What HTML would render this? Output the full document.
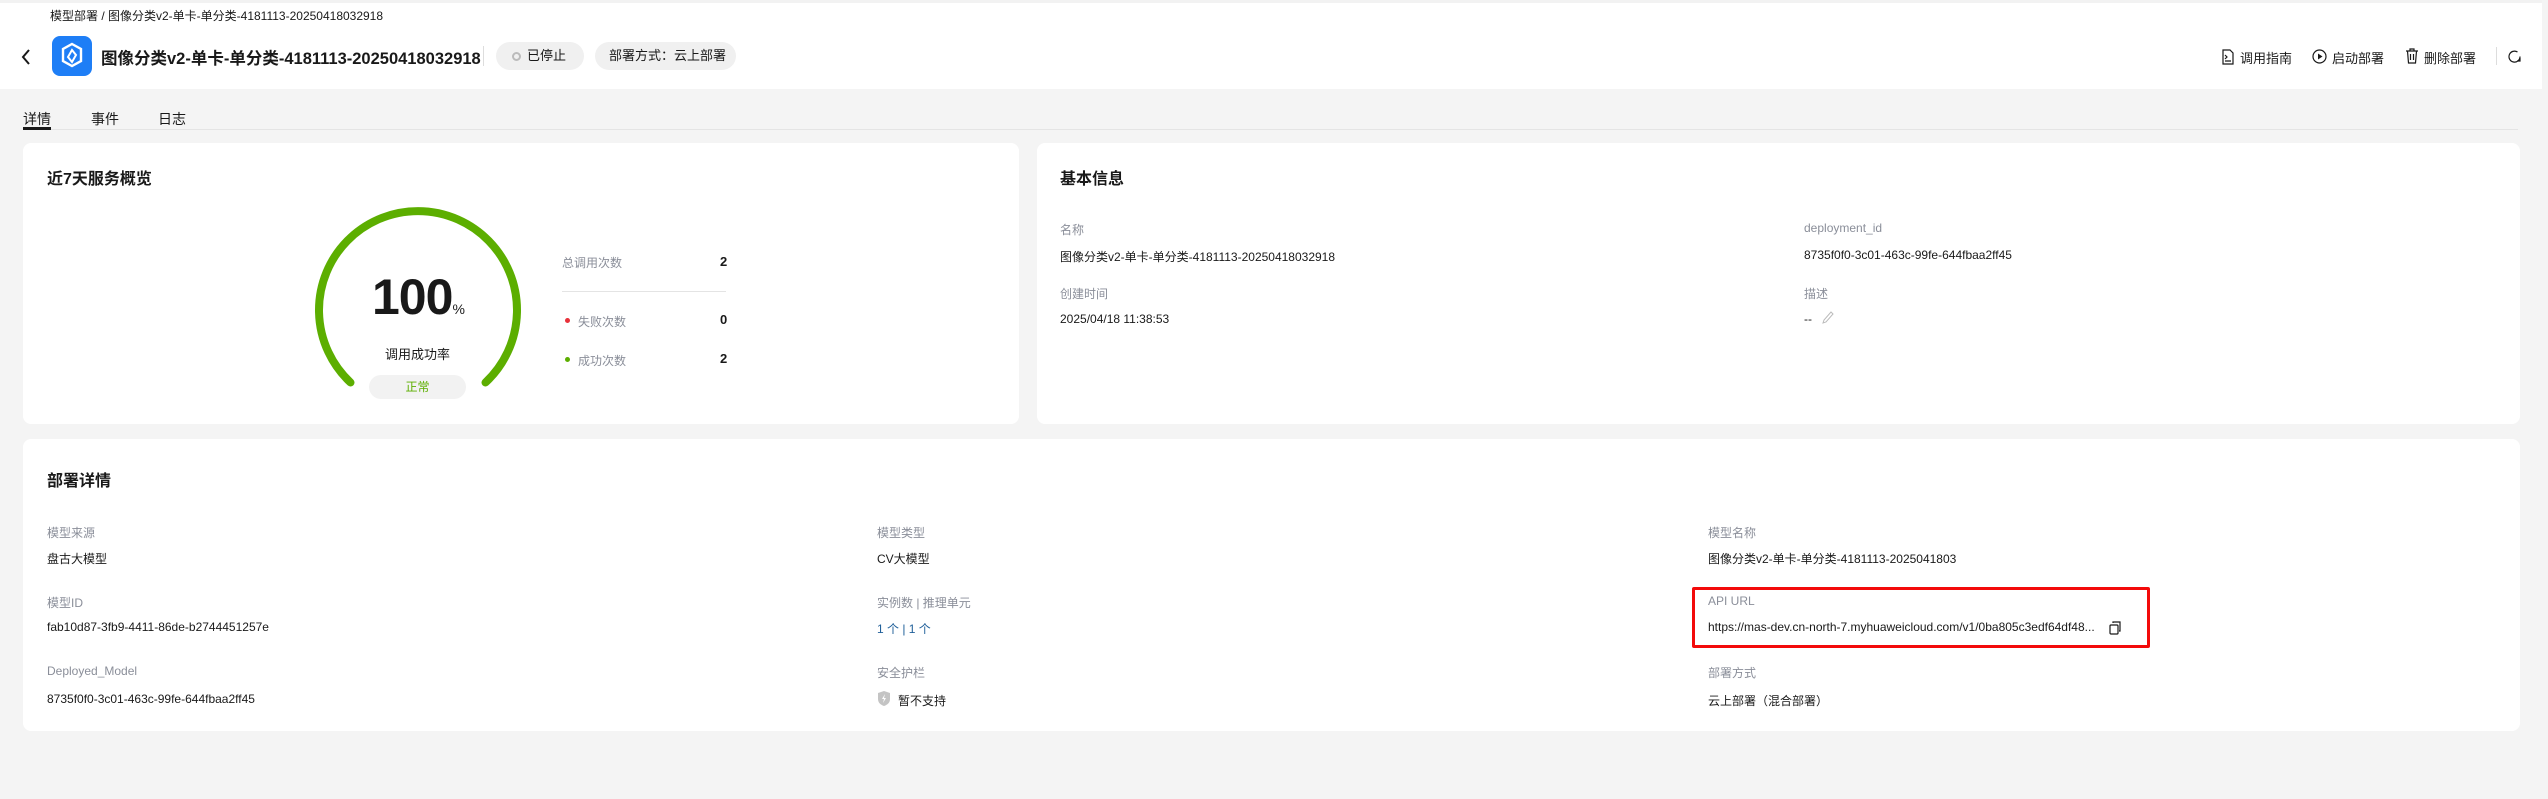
<!DOCTYPE html>
<html><head><meta charset="utf-8"><style>
*{margin:0;padding:0;box-sizing:border-box}
body{width:2548px;height:799px;background:#f4f4f4;font-family:"Liberation Sans","Noto Sans CJK SC",sans-serif;color:#191919;position:relative;overflow:hidden;font-size:12px}
.a{position:absolute;white-space:nowrap}
.hdr{position:absolute;left:0;top:0;width:2542px;height:89px;background:#fff;border-top:3px solid #f2f2f2}
.card{position:absolute;background:#fff;border-radius:8px}
.lbl{color:#8a8e99;font-size:12px}
.val{color:#191919;font-size:12px}
.ct{font-size:16px;font-weight:bold}
.pill{position:absolute;height:28px;border-radius:14px;background:#f0f0f0;font-size:13px;line-height:28px;color:#191919}
</style></head><body>
<div class="hdr"></div>
<div class="a" style="left:50px;top:7px;font-size:12px">模型部署 / 图像分类v2-单卡-单分类-4181113-20250418032918</div>
<svg class="a" style="left:19px;top:47px" width="14" height="20" viewBox="0 0 14 20"><path d="M10 3L4 10l6 7" fill="none" stroke="#191919" stroke-width="2"/></svg>
<div class="a" style="left:52px;top:36px;width:40px;height:40px;background:#1e7ef6;border-radius:8px"></div>
<svg class="a" style="left:52px;top:36px" width="40" height="40" viewBox="0 0 40 40"><path d="M20 8l9 5v12l-9 5-9-5V13z" fill="none" stroke="#fff" stroke-width="2.4"/><path d="M20 14l-4 7 4 5 4-7z" fill="none" stroke="#fff" stroke-width="2"/></svg>
<div class="a" style="left:101px;top:45px;font-size:16.5px;font-weight:bold">图像分类v2-单卡-单分类-4181113-20250418032918</div>
<div class="a" style="left:483px;top:46px;width:1px;height:20px;background:#ddd"></div>
<div class="pill" style="left:496px;top:42px;width:88px"><span style="display:inline-block;width:9px;height:9px;border:2px solid #bbb;border-radius:50%;margin:0 6px 0 16px;vertical-align:-1px"></span>已停止</div>
<div class="pill" style="left:595px;top:42px;width:141px;padding-left:14px">部署方式：云上部署</div>
<svg class="a" style="left:2221px;top:49px" width="14" height="16" viewBox="0 0 14 16"><path d="M2 1h7l3 3v11H2z M4 6l2 2-2 2 M4 12h6" fill="none" stroke="#191919" stroke-width="1.2"/></svg>
<div class="a" style="left:2240px;top:48px;font-size:13px">调用指南</div>
<svg class="a" style="left:2312px;top:49px" width="15" height="15" viewBox="0 0 15 15"><circle cx="7.5" cy="7.5" r="6.5" fill="none" stroke="#191919" stroke-width="1.2"/><path d="M6 4.5v6l4.5-3z" fill="#191919"/></svg>
<div class="a" style="left:2332px;top:48px;font-size:13px">启动部署</div>
<svg class="a" style="left:2405px;top:48px" width="14" height="16" viewBox="0 0 14 16"><path d="M1 3h12M5 3V1h4v2M2.5 3l1 12h7l1-12M5.5 6v6M8.5 6v6" fill="none" stroke="#191919" stroke-width="1.2"/></svg>
<div class="a" style="left:2424px;top:48px;font-size:13px">删除部署</div>
<div class="a" style="left:2496px;top:47px;width:1px;height:18px;background:#ddd"></div>
<svg class="a" style="left:2507px;top:49px" width="15" height="15" viewBox="0 0 15 15"><path d="M13 7.5A5.5 5.5 0 1 1 10.5 3" fill="none" stroke="#191919" stroke-width="1.2"/><path d="M13 9l0 3-3 0" fill="none" stroke="#191919" stroke-width="1.2"/></svg>
<div class="a" style="left:2542px;top:0;width:6px;height:799px;background:#f4f4f4"></div>

<div class="a" style="left:23px;top:109px;font-size:14px">详情</div>
<div class="a" style="left:91px;top:109px;font-size:14px">事件</div>
<div class="a" style="left:158px;top:109px;font-size:14px">日志</div>
<div class="a" style="left:23px;top:129px;width:2495px;height:1px;background:#e4e4e4"></div>
<div class="a" style="left:23px;top:127px;width:28px;height:3px;background:#191919"></div>

<div class="card" style="left:23px;top:143px;width:996px;height:281px"></div>
<div class="a ct" style="left:47px;top:165px">近7天服务概览</div>
<svg class="a" style="left:310px;top:206px" width="216" height="216" viewBox="0 0 216 216"><path d="M40.5 176.5 A99 99 0 1 1 175.5 176.5" fill="none" stroke="#dfe6f0" stroke-width="2"/><path d="M40.5 176.5 A99 99 0 1 1 175.5 176.5" fill="none" stroke="#5cae00" stroke-width="8" stroke-linecap="round"/></svg>
<div class="a" style="left:372px;top:268px;font-size:50px;font-weight:bold;letter-spacing:-1px">100<span style="font-size:14px;font-weight:normal">%</span></div>
<div class="a" style="left:385px;top:344px;font-size:13px">调用成功率</div>
<div class="a" style="left:369px;top:375px;width:97px;height:24px;border-radius:12px;background:#f2f2f2;color:#5cae00;text-align:center;line-height:24px;font-size:12px">正常</div>
<div class="a lbl" style="left:562px;top:254px">总调用次数</div>
<div class="a" style="left:720px;top:254px;font-size:13px;font-weight:bold">2</div>
<div class="a" style="left:562px;top:291px;width:164px;height:1px;background:#e4e4e4"></div>
<div class="a" style="left:565px;top:318px;width:5px;height:5px;border-radius:50%;background:#e8313a"></div>
<div class="a lbl" style="left:578px;top:313px">失败次数</div>
<div class="a" style="left:720px;top:312px;font-size:13px;font-weight:bold">0</div>
<div class="a" style="left:565px;top:357px;width:5px;height:5px;border-radius:50%;background:#5cae00"></div>
<div class="a lbl" style="left:578px;top:352px">成功次数</div>
<div class="a" style="left:720px;top:351px;font-size:13px;font-weight:bold">2</div>

<div class="card" style="left:1037px;top:143px;width:1483px;height:281px"></div>
<div class="a ct" style="left:1060px;top:165px">基本信息</div>
<div class="a lbl" style="left:1060px;top:221px">名称</div>
<div class="a val" style="left:1060px;top:248px">图像分类v2-单卡-单分类-4181113-20250418032918</div>
<div class="a lbl" style="left:1060px;top:285px">创建时间</div>
<div class="a val" style="left:1060px;top:312px">2025/04/18 11:38:53</div>
<div class="a lbl" style="left:1804px;top:221px">deployment_id</div>
<div class="a val" style="left:1804px;top:248px">8735f0f0-3c01-463c-99fe-644fbaa2ff45</div>
<div class="a lbl" style="left:1804px;top:285px">描述</div>
<div class="a val" style="left:1804px;top:312px">--</div>
<svg class="a" style="left:1822px;top:311px" width="12" height="14" viewBox="0 0 12 14"><path d="M9 1l2 2-7 8-3 1 1-3z" fill="none" stroke="#bbb" stroke-width="1"/></svg>

<div class="card" style="left:23px;top:439px;width:2497px;height:292px"></div>
<div class="a ct" style="left:47px;top:467px">部署详情</div>
<div class="a lbl" style="left:47px;top:524px">模型来源</div>
<div class="a val" style="left:47px;top:550px">盘古大模型</div>
<div class="a lbl" style="left:47px;top:594px">模型ID</div>
<div class="a val" style="left:47px;top:620px">fab10d87-3fb9-4411-86de-b2744451257e</div>
<div class="a lbl" style="left:47px;top:664px">Deployed_Model</div>
<div class="a val" style="left:47px;top:692px">8735f0f0-3c01-463c-99fe-644fbaa2ff45</div>
<div class="a lbl" style="left:877px;top:524px">模型类型</div>
<div class="a val" style="left:877px;top:550px">CV大模型</div>
<div class="a lbl" style="left:877px;top:594px">实例数 | 推理单元</div>
<div class="a val" style="left:877px;top:620px;color:#1f5f99">1 个 | 1 个</div>
<div class="a lbl" style="left:877px;top:664px">安全护栏</div>
<svg class="a" style="left:878px;top:691px" width="12" height="15" viewBox="0 0 12 15"><path d="M6 0l6 2v6c0 4-3 6-6 7-3-1-6-3-6-7V2z" fill="#c4c4c4"/><path d="M7 3L4 8h2l-1 4 3-5H6z" fill="#fff"/></svg>
<div class="a val" style="left:898px;top:692px">暂不支持</div>
<div class="a lbl" style="left:1708px;top:524px">模型名称</div>
<div class="a val" style="left:1708px;top:550px">图像分类v2-单卡-单分类-4181113-2025041803</div>
<div class="a" style="left:1692px;top:587px;width:458px;height:61px;border:3px solid #f30a0a;border-radius:2px"></div>
<div class="a lbl" style="left:1708px;top:594px">API URL</div>
<div class="a val" style="left:1708px;top:620px">https://mas-dev.cn-north-7.myhuaweicloud.com/v1/0ba805c3edf64df48...</div>
<svg class="a" style="left:2109px;top:621px" width="13" height="14" viewBox="0 0 13 14"><rect x="1" y="4" width="8" height="9" rx="1" fill="none" stroke="#191919" stroke-width="1.2"/><path d="M4 2V1h7v9h-1" fill="none" stroke="#191919" stroke-width="1.2"/></svg>
<div class="a lbl" style="left:1708px;top:664px">部署方式</div>
<div class="a val" style="left:1708px;top:692px">云上部署（混合部署）</div>
</body></html>
